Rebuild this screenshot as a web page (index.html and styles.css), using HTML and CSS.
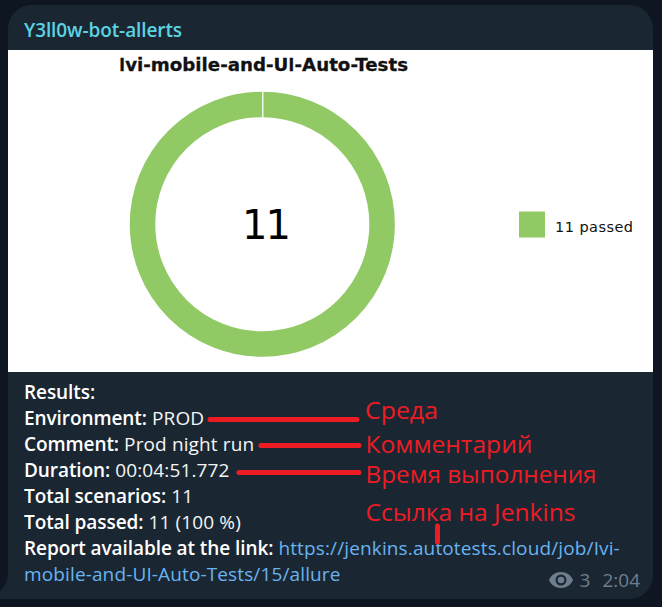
FILE: index.html
```html
<!DOCTYPE html>
<html lang="ru">
<head>
<meta charset="utf-8">
<title>Y3ll0w-bot-allerts</title>
<link rel="stylesheet" href="styles.css">
</head>
<body>
<article class="message">
  <svg class="tail" viewBox="0 0 8 26"><path d="M8 0V26H0V18Q8 11 8 0Z"/></svg>
  <header class="sender">Y3ll0w-bot-allerts</header>
  <svg class="chart" viewBox="8 50 645 322">
    <text class="chart-title" x="119" y="70.500" textLength="289" lengthAdjust="spacingAndGlyphs"><tspan class="cap-i">I</tspan>vi-mobile-and-U<tspan class="cap-i">I</tspan>-Auto-Tests</text>
    <circle class="ring" cx="262.3" cy="224.2" r="119.8"/>
    <path class="ring-seam" d="M262.8 91V118"/>
    <text class="chart-total" x="242" y="239" textLength="49">11</text>
    <rect class="legend-mark" x="519" y="211.500" width="26" height="26"/>
    <text class="legend-text" x="555" y="231.500" textLength="78">11 passed</text>
  </svg>
  <div class="text">
    <p><b>Results:</b></p>
    <p><b>Environment:</b> PROD</p>
    <p><b>Comment:</b> Prod night run</p>
    <p><b>Duration:</b> 00:04:51.772</p>
    <p><b>Total scenarios:</b> 11</p>
    <p><b>Total passed:</b> 11 (100 %)</p>
    <p><b>Report available at the link:</b> <a>https://jenkins.autotests.cloud/job/Ivi-<br>mobile-and-UI-Auto-Tests/15/allure</a></p>
  </div>
  <footer class="meta">
    <svg class="eye" viewBox="0 0 24 16"><path fill-rule="evenodd" d="M12 0C6.500 0 2 3.200 0 8c2 4.800 6.500 8 12 8s10-3.200 12-8C22 3.200 17.500 0 12 0Zm0 2.500a5.500 5.500 0 1 1 0 11a5.500 5.500 0 0 1 0-11Z"/><circle cx="12" cy="8" r="3.300"/></svg>
    <span class="views">3</span><span>2:04</span>
  </footer>
</article>
<svg class="notes" viewBox="0 0 662 607">
  <path d="M210 419.500H357M261 445.500H359M239 472.500H359M437.500 526V542"/>
  <text x="365" y="419" textLength="73" lengthAdjust="spacingAndGlyphs">Среда</text>
  <text x="365.500" y="453" textLength="167" lengthAdjust="spacingAndGlyphs">Комментарий</text>
  <text x="365.500" y="483" textLength="231" lengthAdjust="spacingAndGlyphs">Время выполнения</text>
  <text x="365.500" y="521" textLength="210" lengthAdjust="spacingAndGlyphs">Ссылка на Jenkins</text>
</svg>
</body>
</html>
```
FILE: styles.css
```css
* { box-sizing: border-box; }
body {
  margin: 0;
  width: 662px;
  height: 607px;
  overflow: hidden;
  position: relative;
  padding: 5px 9px 8px 8px;
  background: #0e1621;
  font: 19px/26px "Open Sans", sans-serif;
  color: #f5f5f5;
}
.message {
  position: relative;
  height: 594px;
  background: #1a2733;
  border-radius: 24px 24px 24px 0;
}
.tail {
  position: absolute;
  left: -8px;
  bottom: 0;
  width: 8px;
  height: 26px;
  fill: #1a2733;
}
.sender {
  height: 45px;
  padding: 12px 16px 0;
  color: #5cd2e2;
  font-weight: 600;
  letter-spacing: -.1px;
}
.chart { display: block; width: 645px; height: 322px; background: #fff; }
.chart text { font-family: "DejaVu Sans", sans-serif; fill: #111; }
.chart .chart-title { font-size: 18px; font-weight: 700; stroke: #111; stroke-width: .3; }
.chart .cap-i { font-family: "Open Sans", sans-serif; font-size: 18.500px; }
.chart .chart-total { font-size: 40px; fill: #000; }
.chart .legend-text { font-size: 14.500px; }
.ring { fill: none; stroke: #91c965; stroke-width: 25.500; }
.ring-seam { stroke: #fff; stroke-width: 1.300; }
.legend-mark { fill: #91c965; }
.text { padding: 7px 16px 0; white-space: nowrap; letter-spacing: .13px; }
.text p { margin: 0; }
.text b { font-weight: 600; color: #fff; letter-spacing: -.08px; }
.text a { color: #69b3ef; }
.meta {
  position: absolute;
  right: 13px;
  bottom: 6px;
  display: flex;
  align-items: center;
  color: #6d7f8f;
}
.eye { width: 24px; height: 16px; margin-right: 7px; fill: currentColor; }
.views { margin-right: 12px; }
.notes { position: absolute; inset: 0; width: 662px; height: 607px; }
.notes path { stroke: #ed1c24; stroke-width: 5; stroke-linecap: round; }
.notes text { fill: #ed1c24; font-family: "Open Sans", sans-serif; font-size: 24px; }
```
